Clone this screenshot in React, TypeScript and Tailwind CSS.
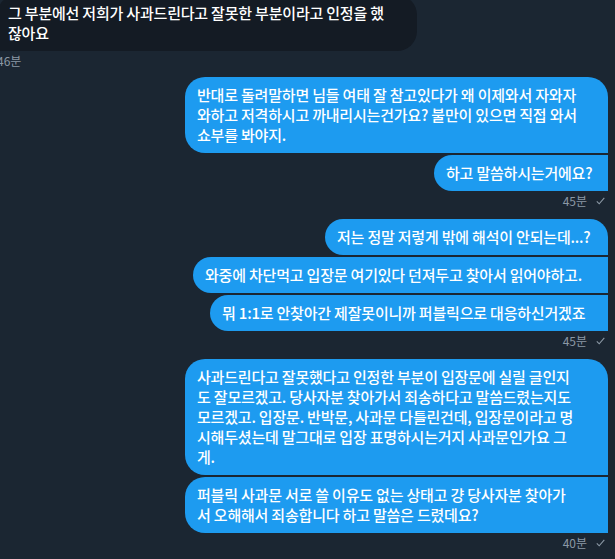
import React from "react";

function Check() {
  return (
    <svg width="9" height="8" viewBox="0 0 9 8" className="inline-block" aria-hidden>
      <path d="M0.8 4.3 L3.2 6.8 L8.3 0.8" fill="none" stroke="#8b98a5" strokeWidth="1.1" />
    </svg>
  );
}

function Stamp({ t }: { t: string }) {
  return (
    <div className="flex items-center justify-end gap-[9px] pr-[3px] h-[16px] leading-[16px] text-[12px] text-[#8b98a5]">
      <span>{t}</span>
      <Check />
    </div>
  );
}

function Sent({ w, lines, first }: { w: string; lines: string[]; first?: boolean }) {
  return (
    <div
      className={
        (first ? "rounded-tr-[20px] " : "rounded-tr-none ") +
        "rounded-l-[20px] rounded-br-none bg-[#1d9bf0] text-white px-[12px] py-[8px] text-[15px] leading-[20px] whitespace-nowrap tracking-[-0.2px] font-medium " +
        w
      }
    >
      {lines.map((l, i) => (
        <div key={i}>{l}</div>
      ))}
    </div>
  );
}

export default function App() {
  return (
    <div className="w-[615px] h-[559px] overflow-hidden bg-[#1b2632] font-['Noto_Sans_CJK_KR','Noto_Sans',sans-serif]">
      <div className="ml-[-3px] mt-[-5.5px]">
        <div className="w-[420px] rounded-[20px] rounded-bl-none bg-[#141b24] text-white pl-[11px] pr-[12px] py-[8px] text-[15px] leading-[20px] whitespace-nowrap tracking-[-0.2px] font-medium">
          <div>그 부분에선 저희가 사과드린다고 잘못한 부분이라고 인정을 했</div>
          <div>잖아요</div>
        </div>
        <div className="mt-[2px] h-[16px] leading-[16px] text-[12px] text-[#8b98a5]">46분</div>
      </div>

      <div className="flex flex-col items-end pr-[7px]">
        <div className="mt-[8.5px]" />
        <Sent
          first
          w="w-[423px]"
          lines={[
            "반대로 돌려말하면 님들 여태 잘 참고있다가 왜 이제와서 자와자",
            "와하고 저격하시고 까내리시는건가요? 불만이 있으면 직접 와서",
            "쇼부를 봐야지.",
          ]}
        />
        <div className="mt-[2px]" />
        <Sent w="w-[174px]" lines={["하고 말씀하시는거에요?"]} />
        <div className="mt-[1.5px] w-full">
          <Stamp t="45분" />
        </div>
        <div className="mt-[10.5px]" />
        <Sent first w="w-[283px]" lines={["저는 정말 저렇게 밖에 해석이 안되는데...?"]} />
        <div className="mt-[2px]" />
        <Sent w="w-[415px]" lines={["와중에 차단먹고 입장문 여기있다 던져두고 찾아서 읽어야하고."]} />
        <div className="mt-[2px]" />
        <Sent w="w-[398px]" lines={["뭐 1:1로 안찾아간 제잘못이니까 퍼블릭으로 대응하신거겠죠"]} />
        <div className="mt-[1.5px] w-full">
          <Stamp t="45분" />
        </div>
        <div className="mt-[10.5px]" />
        <Sent
          first
          w="w-[423px]"
          lines={[
            "사과드린다고 잘못했다고 인정한 부분이 입장문에 실릴 글인지",
            "도 잘모르겠고. 당사자분 찾아가서 죄송하다고 말씀드렸는지도",
            "모르겠고. 입장문. 반박문, 사과문 다틀린건데, 입장문이라고 명",
            "시해두셨는데 말그대로 입장 표명하시는거지 사과문인가요 그",
            "게.",
          ]}
        />
        <div className="mt-[2px]" />
        <Sent
          w="w-[423px]"
          lines={[
            "퍼블릭 사과문 서로 쓸 이유도 없는 상태고 걍 당사자분 찾아가",
            "서 오해해서 죄송합니다 하고 말씀은 드렸데요?",
          ]}
        />
        <div className="mt-[1.5px] w-full">
          <Stamp t="40분" />
        </div>
      </div>
    </div>
  );
}
